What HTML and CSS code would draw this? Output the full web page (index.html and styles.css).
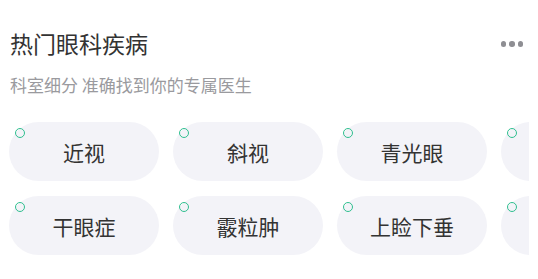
FILE: index.html
```html
<!DOCTYPE html>
<html lang="zh">
<head>
<meta charset="utf-8">
<link rel="stylesheet" href="styles.css">
</head>
<body>
<div class="card">
  <div class="head">
    <div class="title">热门眼科疾病</div>
    <div class="more"><span></span><span></span><span></span></div>
  </div>
  <div class="sub">科室细分 准确找到你的专属医生</div>
  <div class="scroller">
    <div class="grid">
      <div class="pill"><i class="ring"></i>近视</div>
      <div class="pill"><i class="ring"></i>斜视</div>
      <div class="pill"><i class="ring"></i>青光眼</div>
      <div class="pill"><i class="ring"></i></div>
      <div class="pill"><i class="ring"></i>干眼症</div>
      <div class="pill"><i class="ring"></i>霰粒肿</div>
      <div class="pill"><i class="ring"></i>上睑下垂</div>
      <div class="pill"><i class="ring"></i></div>
    </div>
  </div>
</div>
</body>
</html>
```
FILE: styles.css
```css
html, body {
  margin: 0;
  padding: 0;
  background: #ffffff;
}
body {
  font-family: "Noto Sans CJK SC", "Noto Sans", sans-serif;
  width: 538px;
  height: 279px;
  overflow: hidden;
}
.card {
  padding: 0 9px 0 9px;
}
.head {
  display: flex;
  align-items: center;
  justify-content: space-between;
  height: 30px;
  margin-top: 28px;
}
.title {
  font-size: 23px;
  color: #333333;
  padding-left: 1px;
  line-height: 30px;
}
.more {
  display: flex;
  gap: 3px;
  padding-right: 6px;
  margin-top: 2px;
}
.more span {
  width: 5.5px;
  height: 5.5px;
  border-radius: 50%;
  background: #8e8e93;
}
.sub {
  margin-top: 15px;
  padding-left: 1px;
  font-size: 17px;
  line-height: 24px;
  color: #9a9a9e;
}
.scroller {
  margin-top: 25px;
  overflow: hidden;
  width: 520px;
}
.grid {
  display: grid;
  grid-template-columns: repeat(4, 150px);
  grid-auto-rows: 59px;
  column-gap: 14px;
  row-gap: 15px;
  width: max-content;
}
.pill {
  position: relative;
  background: #f3f3f8;
  border-radius: 30px;
  display: flex;
  align-items: center;
  justify-content: center;
  font-size: 21px;
  color: #333333;
}
.ring {
  position: absolute;
  box-sizing: border-box;
  left: 5.5px;
  top: 5.5px;
  width: 10px;
  height: 10px;
  border: 1.7px solid #2fbf8f;
  border-radius: 50%;
}
```
